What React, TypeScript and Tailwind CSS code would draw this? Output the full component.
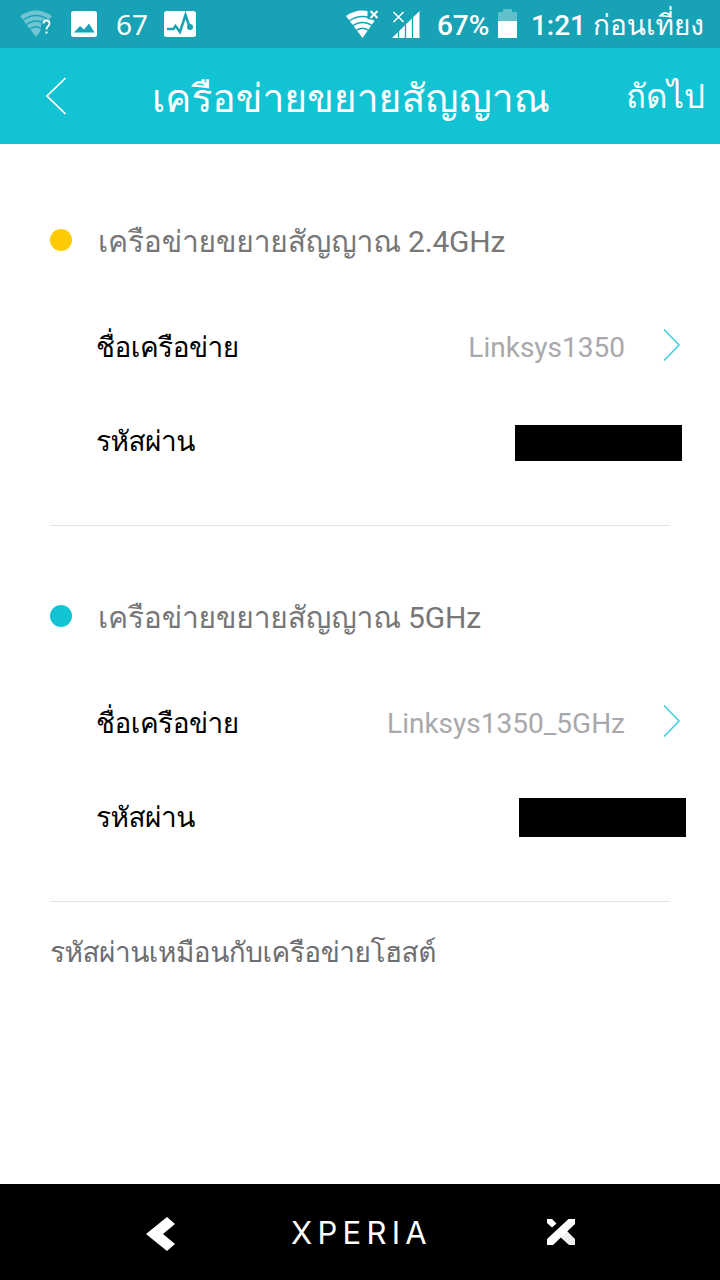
const thai = "font-[Roboto,Loma,'Noto_Sans_Thai','Noto_Sans',sans-serif]";

const networks = [
  { title: "เครือข่ายขยายสัญญาณ", band: "2.4GHz", ssid: "Linksys1350", dot: "bg-[#ffcb05]", mask: "mr-[38px] mt-1 h-9" },
  { title: "เครือข่ายขยายสัญญาณ", band: "5GHz", ssid: "Linksys1350_5GHz", dot: "bg-[#12c3d3]", mask: "mr-[34px] mt-px h-[39px]" },
];

function WifiUnknown() {
  return (
    <svg className="ml-5 h-[38px] w-8 shrink-0" viewBox="0 0 32 38">
      <path d="M0 11Q16 0 32 11L16 32Z" fill="#6fc6d2" />
      <g fill="none" stroke="#18a2b5" strokeWidth="1.3">
        <path d="M2.5 15.5Q16 5.500 29.500 15.500" />
        <path d="M6 20Q16 12 26 20" />
        <path d="M9.500 24.500Q16 19 22.500 24.500" />
      </g>
      <path d="M22 15h10v14h-12z" fill="#18a2b5" />
      <path d="M23.500 18.500q0-3 3-3t3 3q0 1.500-1.500 2.700t-1.500 3.300" fill="none" stroke="#fff" strokeWidth="1.800" />
      <path d="M25.500 26.500h2v2h-2z" fill="#fff" />
    </svg>
  );
}

function WifiOff() {
  return (
    <svg className="h-[38px] w-[34px] shrink-0" viewBox="0 0 34 38">
      <path d="M0 11Q16 0 32 11L16.500 33Z" fill="#fff" />
      <g fill="none" stroke="#18a2b5" strokeWidth="1.400">
        <path d="M2 16.500Q16.500 6.500 31 16.500" />
        <path d="M5.500 21.500Q16.500 13.500 27.500 21.500" />
        <path d="M9 26.500Q16.500 20 24 26.500" />
      </g>
      <path d="M21.500 3H34v12H27l-5.500-1z" fill="#18a2b5" />
      <path d="M24.500 6l7 7M31.500 6l-7 7" stroke="#fff" strokeWidth="2" />
    </svg>
  );
}

function Signal() {
  return (
    <svg className="ml-3 h-[38px] w-7 shrink-0" viewBox="0 0 28 38">
      <path d="M0 33L27.500 6V33Z" fill="#fff" />
      <path d="M6.500 24V33M13.500 15V33M20.500 9V33" stroke="#18a2b5" strokeWidth="1.300" />
      <path d="M1.500 7l10 10M11.500 7l-10 10" stroke="#18a2b5" strokeWidth="3" />
      <path d="M1.500 7l10 10M11.500 7l-10 10" stroke="#fff" strokeWidth="1.600" />
    </svg>
  );
}

function StatusBar() {
  return (
    <div className="flex h-12 items-center bg-[#18a2b5] text-white">
      <WifiUnknown />
      <svg className="ml-[19px] size-[26px] shrink-0" viewBox="0 0 26 26">
        <rect width="26" height="26" rx="2.500" fill="#fff" />
        <path d="M3 21.500L9 15l4 3.500 5-6 5.500 9z" fill="#18a2b5" />
      </svg>
      <span className="ml-[19px] w-[30px] font-['Noto_Sans',sans-serif] text-[28px] leading-[48px] whitespace-nowrap">67</span>
      <svg className="ml-[18px] h-[26px] w-8 shrink-0" viewBox="0 0 32 26">
        <rect width="32" height="26" rx="2.500" fill="#fff" />
        <path d="M3 18h6.500l2-3 4.500 6 5.500-17 4 12" fill="none" stroke="#18a2b5" strokeWidth="2.500" />
        <circle cx="26" cy="16" r="3" fill="#18a2b5" />
      </svg>
      <div className="ml-auto flex h-12 items-center">
        <WifiOff />
        <Signal />
        <span className="ml-[17px] w-[53px] pt-1 font-[Roboto] text-[28px] leading-[46px] font-medium whitespace-nowrap">67%</span>
        <svg className="ml-2 h-[30px] w-[19px] shrink-0" viewBox="0 0 19 30">
          <path d="M5 0h9v3h5v9H0V3h5z" fill="#62c0cd" />
          <path d="M0 12h19v17H0z" fill="#fff" />
        </svg>
        <span className="ml-3.5 pt-1 font-[Roboto] text-[28px] leading-[46px] font-medium">1:21</span>
        <span className={`${thai} mr-4 ml-[7px] w-[111px] pt-1 text-[28px] leading-[46px] whitespace-nowrap`}>ก่อนเที่ยง</span>
      </div>
    </div>
  );
}

function Chevron() {
  return (
    <svg className="mr-10 mb-0.5 ml-[38px] h-8 w-[17px] shrink-0" viewBox="0 0 17 32" fill="none" stroke="#4dd2de" strokeWidth="1.700">
      <path d="M1 .500L16 16 1 31.500" />
    </svg>
  );
}

function NavBar() {
  return (
    <nav className="flex h-24 items-center bg-black text-white">
      <svg className="mt-1 ml-[146px] h-9 w-[30px]" viewBox="0 0 30 36">
        <path d="M21 1l8 7-12 10 12 10-8 7L0 18z" fill="#fff" />
      </svg>
      <span className="ml-[115px] w-[138px] pt-0.5 font-[Inter,sans-serif] text-[31px] leading-[46px] font-normal tracking-[5.300px] whitespace-nowrap">XPERIA</span>
      <svg className="ml-[117px] h-7 w-[30px]" viewBox="0 0 30 28">
        <path d="M15 14l6-1 8 8v6h-6L12 17z" fill="#eee" />
        <path d="M1 1h5l4.500 4.500-4.500 4L1 5zM22.500 1H29v5L7 27H1v-6z" fill="#fff" />
      </svg>
    </nav>
  );
}

export default function App() {
  return (
    <div className={`${thai} flex h-[1280px] w-[720px] flex-col overflow-hidden bg-white`}>
      <StatusBar />
      <header className="flex h-24 items-center bg-[#12c3d3] text-white">
        <svg className="ml-[46px] h-[38px] w-5 shrink-0" viewBox="0 0 20 38" fill="none" stroke="#fff" strokeWidth="1.700">
          <path d="M19.500 1L1 19l18.500 18" />
        </svg>
        <h1 className="ml-[86px] w-[400px] pt-1.5 text-[39px] leading-[92px] whitespace-nowrap">เครือข่ายขยายสัญญาณ</h1>
        <button className="ml-[74px] w-[78px] pt-0.5 text-left text-[33px] leading-[96px] whitespace-nowrap">ถัดไป</button>
      </header>

      <main className="flex-1 pt-1.5">
        {networks.map((n) => (
          <section key={n.band}>
            <div className="mb-[31px] flex h-[118px] items-center pt-16 pl-[50px]">
              <span className={`mb-0.5 size-[22px] rounded-full ${n.dot}`} />
              <h2 className="ml-[26px] text-[30px] tracking-[-0.200px] text-[#777]">{`${n.title} ${n.band}`}</h2>
            </div>
            <div className="flex h-[94px] items-center pl-24">
              <span className="mt-1 text-[28px] tracking-[-0.500px] text-black">ชื่อเครือข่าย</span>
              <span className="mt-1 ml-auto text-[28px] text-[#a7a9ac]">{n.ssid}</span>
              <Chevron />
            </div>
            <div className="flex h-24 items-center pl-24">
              <span className="mt-0.5 text-[28px] tracking-[-0.500px] text-black">รหัสผ่าน</span>
              <span className={`ml-auto w-[167px] bg-black ${n.mask}`} />
            </div>
            <div className="mr-[50px] ml-[50px] h-[37px] border-b border-[#e1e2e3]" />
          </section>
        ))}
        <p className="mt-7 pl-[50px] text-[28px] leading-[46px] tracking-[-0.500px] text-[#6d6e71]">รหัสผ่านเหมือนกับเครือข่ายโฮสต์</p>
      </main>
      <NavBar />
    </div>
  );
}
